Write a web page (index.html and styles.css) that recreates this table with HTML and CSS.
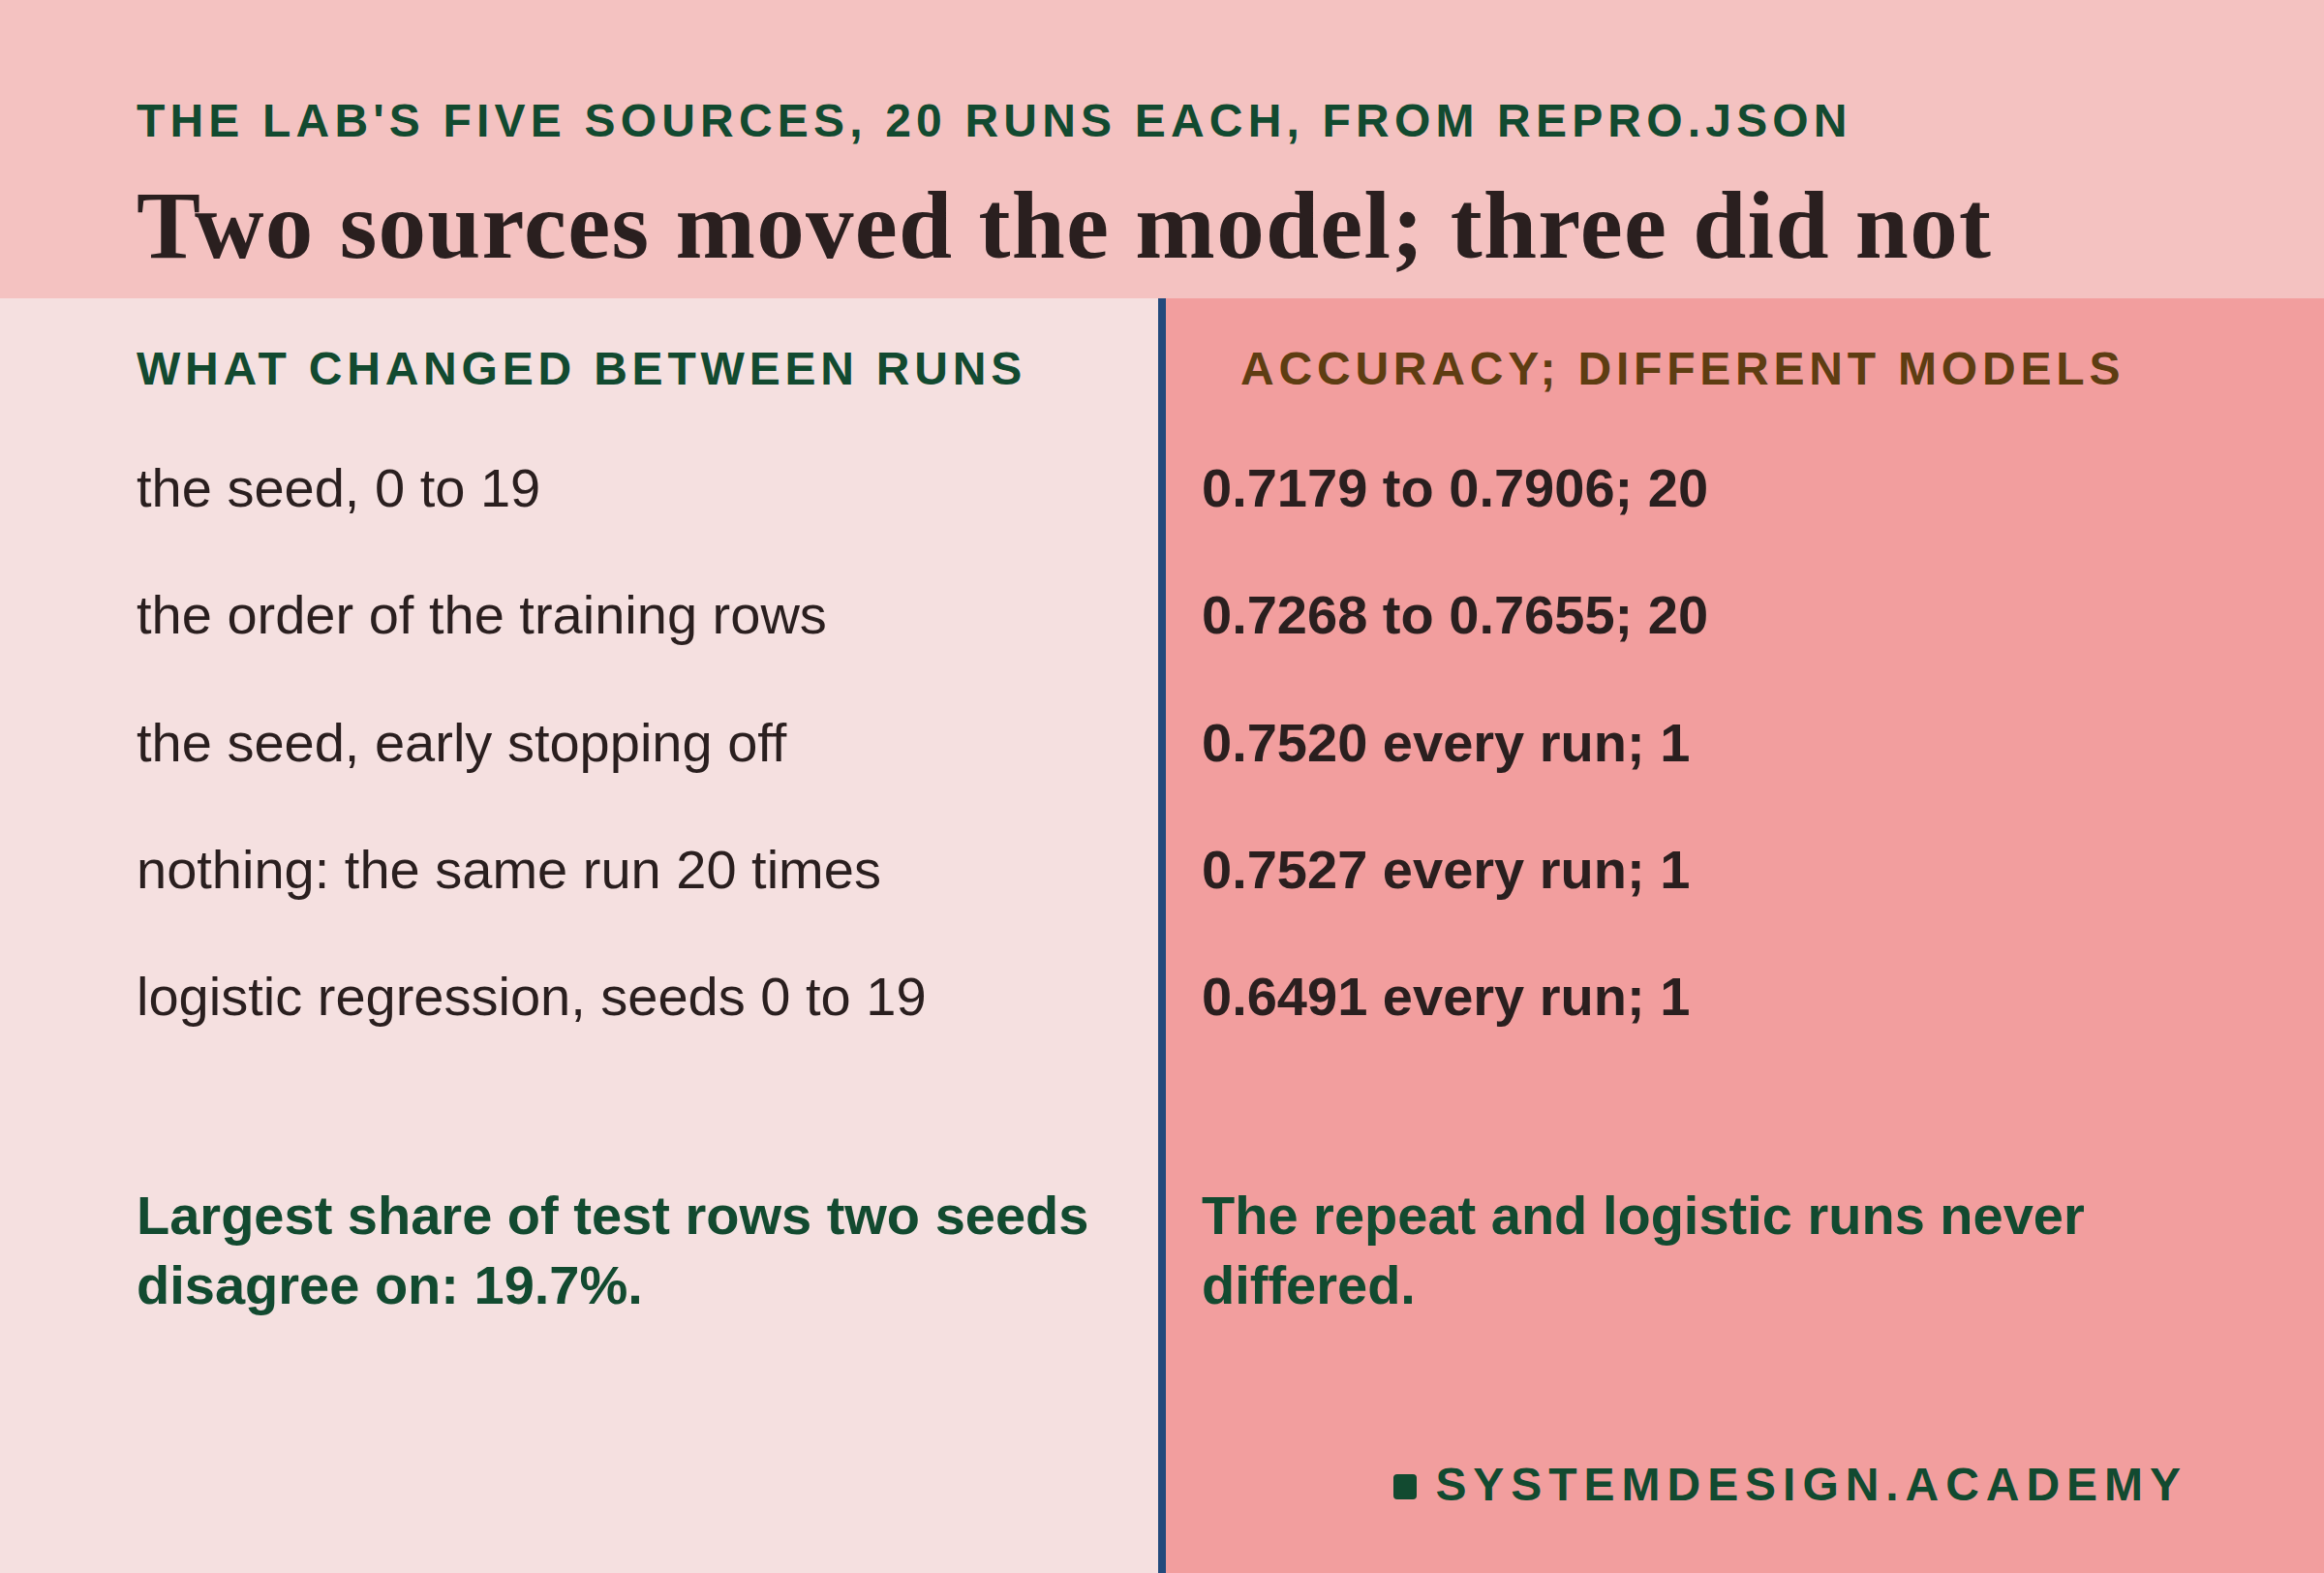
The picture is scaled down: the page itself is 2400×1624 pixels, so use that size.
FILE: index.html
```html
<!DOCTYPE html>
<html lang="en">
<head>
<meta charset="utf-8">
<title>Two sources moved the model; three did not</title>
<link rel="stylesheet" href="styles.css">
</head>
<body>
<div class="page">
  <header class="hero">
    <p class="kicker">THE LAB'S FIVE SOURCES, 20 RUNS EACH, FROM REPRO.JSON</p>
    <h1 class="title">Two sources moved the model; three did not</h1>
  </header>
  <main class="panels">
    <section class="panel panel-left">
      <h2 class="col-head">WHAT CHANGED BETWEEN RUNS</h2>
      <ul class="rows">
        <li>the seed, 0 to 19</li>
        <li>the order of the training rows</li>
        <li>the seed, early stopping off</li>
        <li>nothing: the same run 20 times</li>
        <li>logistic regression, seeds 0 to 19</li>
      </ul>
      <p class="note">Largest share of test rows two seeds disagree on: 19.7%.</p>
    </section>
    <div class="divider"></div>
    <section class="panel panel-right">
      <h2 class="col-head col-head-alt">ACCURACY; DIFFERENT MODELS</h2>
      <ul class="rows rows-values">
        <li>0.7179 to 0.7906; 20</li>
        <li>0.7268 to 0.7655; 20</li>
        <li>0.7520 every run; 1</li>
        <li>0.7527 every run; 1</li>
        <li>0.6491 every run; 1</li>
      </ul>
      <p class="note">The repeat and logistic runs never differed.</p>
      <div class="brand">
        <span class="brand-mark"></span>
        <span class="brand-name">SYSTEMDESIGN.ACADEMY</span>
      </div>
    </section>
  </main>
</div>
</body>
</html>
```
FILE: styles.css
```css
html, body {
  margin: 0;
  padding: 0;
}

body {
  font-family: "Liberation Sans", Arial, sans-serif;
  color: #2a1f1f;
}

.page {
  width: 2400px;
  height: 1624px;
  display: flex;
  flex-direction: column;
  overflow: hidden;
}

.hero {
  height: 308px;
  box-sizing: border-box;
  padding: 97px 141px 0;
  background: #f4c2c1;
}

.kicker {
  margin: 0;
  font-size: 48px;
  line-height: 56px;
  font-weight: 700;
  letter-spacing: 0.108em;
  color: #124a30;
}

.title {
  margin: 25px 0 0;
  font-family: "Liberation Serif", "Times New Roman", serif;
  font-size: 99px;
  line-height: 110px;
  font-weight: 700;
  letter-spacing: 1.3px;
  color: #2a1f1f;
  white-space: nowrap;
}

.panels {
  flex: 1;
  display: grid;
  grid-template-columns: 1196px 8px 1196px;
}

.panel {
  display: flex;
  flex-direction: column;
  box-sizing: border-box;
  padding-top: 45px;
}

.panel-left {
  background: #f5e0e0;
  padding-left: 141px;
  padding-right: 40px;
}

.panel-right {
  background: #f29e9e;
  padding-left: 37px;
  padding-right: 141px;
  padding-bottom: 63px;
}

.divider {
  background: #234a7c;
}

.col-head {
  margin: 0;
  font-size: 48px;
  line-height: 56px;
  font-weight: 700;
  letter-spacing: 0.1em;
  color: #124a30;
}

.col-head-alt {
  padding-left: 40px;
  color: #5e3d12;
}

.rows {
  list-style: none;
  margin: 29px 0 0;
  padding: 0;
}

.rows li {
  font-size: 56px;
  line-height: 131.25px;
  white-space: nowrap;
}

.rows-values li {
  font-weight: 700;
}

.note {
  margin: 125px 0 0;
  font-size: 56px;
  line-height: 72px;
  font-weight: 700;
  color: #124a30;
}

.brand {
  margin-top: auto;
  display: flex;
  align-items: center;
  justify-content: flex-end;
  gap: 19px;
  color: #124a30;
}

.brand-mark {
  width: 24px;
  height: 26px;
  border-radius: 4px;
  background: #124a30;
  margin-top: 3px;
}

.brand-name {
  font-size: 48px;
  line-height: 56px;
  font-weight: 700;
  letter-spacing: 0.145em;
  margin-right: 0;
}
```
